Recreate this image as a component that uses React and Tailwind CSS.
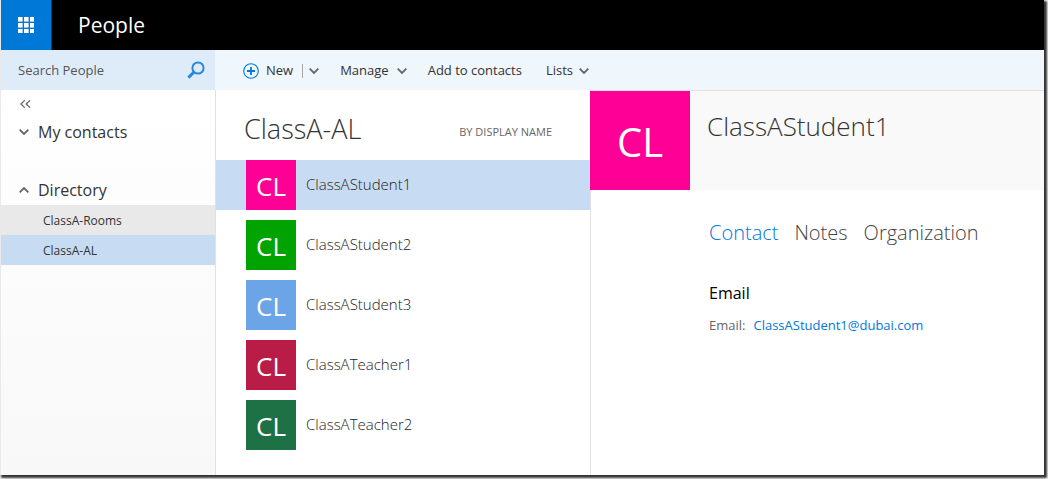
import { useState } from 'react';

const contacts = [
  { name: 'ClassAStudent1', color: 'bg-[#ff0097]' },
  { name: 'ClassAStudent2', color: 'bg-[#00a300]' },
  { name: 'ClassAStudent3', color: 'bg-[#6ba5e7]' },
  { name: 'ClassATeacher1', color: 'bg-[#b91d47]' },
  { name: 'ClassATeacher2', color: 'bg-[#1e7145]' },
];

const folders = ['ClassA-Rooms', 'ClassA-AL'];
const tabs = ['Contact', 'Notes', 'Organization'];

function Chevron({ className }) {
  return (
    <svg className={className} viewBox="0 0 10 6" fill="none" stroke="currentColor" strokeWidth="1.8">
      <path d="M0.7 0.7L5 5L9.3 0.7" />
    </svg>
  );
}

function WaffleIcon() {
  return (
    <svg className="size-4" viewBox="0 0 16 16" fill="currentColor">
      {[0, 6, 12].map(y => [0, 6, 12].map(x => <rect key={`${x}-${y}`} x={x} y={y} width="4.6" height="4.6" />))}
    </svg>
  );
}

function SearchIcon() {
  return (
    <svg className="size-[18px]" viewBox="0 0 18 18" fill="none" stroke="currentColor">
      <circle cx="11" cy="7" r="5.6" strokeWidth="2" />
      <path d="M7 11L1.4 16.6" strokeWidth="3" />
    </svg>
  );
}

function PlusIcon() {
  return (
    <svg className="size-4 text-[#0078d7]" viewBox="0 0 16 16" fill="none" stroke="currentColor">
      <circle cx="8" cy="8" r="7.3" strokeWidth="1.1" />
      <path d="M8 4V12M4 8H12" strokeWidth="1.8" />
    </svg>
  );
}

function TopBar() {
  return (
    <header className="flex h-[50px] items-center bg-black text-white">
      <button className="flex h-full w-[51px] items-center justify-center border-r border-[#333] bg-[#0078d7]" aria-label="Apps">
        <WaffleIcon />
      </button>
      <h1 className="ml-[26px] pt-0.5 text-[21px]">People</h1>
    </header>
  );
}

function CommandBar() {
  return (
    <div className="flex h-10 bg-[#eff6fc] text-[13px] text-[#333]">
      <form className="flex w-[214px] shrink-0 items-center bg-[#deecf9] pr-[10px] pl-[17px]" onSubmit={e => e.preventDefault()}>
        <input
          className="min-w-0 flex-1 pt-0.5 outline-none placeholder:text-[#555] placeholder:opacity-100"
          type="text"
          aria-label="Search People"
          placeholder="Search People"
        />
        <button className="text-[#2b88d8]" type="submit" aria-label="Search">
          <SearchIcon />
        </button>
      </form>
      <div className="flex items-center pt-0.5 pl-7">
        <button className="flex items-center gap-[7px]">
          <PlusIcon />
          New
        </button>
        <span className="ml-[9px] h-[14px] w-px bg-[#a6a6a6]" />
        <button className="ml-[6px]" aria-label="More new options">
          <Chevron className="h-[6px] w-[10px] text-[#666]" />
        </button>
        <button className="ml-[21px] flex items-center gap-2">
          Manage
          <Chevron className="h-[6px] w-[10px] text-[#666]" />
        </button>
        <button className="ml-[21px]">Add to contacts</button>
        <button className="ml-6 flex items-center gap-[6px]">
          Lists
          <Chevron className="h-[6px] w-[10px] text-[#666]" />
        </button>
      </div>
    </div>
  );
}

function Sidebar({ folder, onSelect }) {
  return (
    <nav className="bg-linear-to-b from-white to-[#f8f8f8] text-[#333]">
      <button className="mt-2 ml-[19px] flex h-3 items-center text-[#666]" aria-label="Collapse">
        <svg className="h-2 w-[11px]" viewBox="0 0 11 8" fill="none" stroke="currentColor" strokeWidth="1.3">
          <path d="M4.8 0.4L1 4L4.8 7.6M10 0.4L6.2 4L10 7.6" />
        </svg>
      </button>
      <button className="mt-[10px] flex h-6 items-center gap-[9px] pl-[18px] text-base">
        <Chevron className="h-[6px] w-[10px] text-[#666]" />
        My contacts
      </button>
      <button className="mt-[34px] flex h-6 items-center gap-[9px] pl-[18px] text-base">
        <Chevron className="h-[6px] w-[10px] rotate-180 text-[#666]" />
        Directory
      </button>
      <ul className="mt-[3px] text-[12px]">
        {folders.map(name => (
          <li key={name}>
            <button
              className={`h-[30px] w-full pt-0.5 pl-[42px] text-left ${name === folder ? 'bg-[#c7dcf2]' : 'bg-[#e9e9e9]'}`}
              onClick={() => onSelect(name)}
            >
              {name}
            </button>
          </li>
        ))}
      </ul>
    </nav>
  );
}

function ContactList({ folder, selected, onSelect }) {
  return (
    <section className="border-l border-[#e1e1e1]">
      <div className="flex h-[70px] items-center justify-between pr-[38px] pl-7">
        <h2 className="pt-2 text-[27px] font-light text-[#333]">{folder}</h2>
        <button className="pt-[14px] text-[11px] text-[#666]">BY DISPLAY NAME</button>
      </div>
      <ul className="flex flex-col gap-[10px]">
        {contacts.map(contact => (
          <li key={contact.name}>
            <button
              className={`flex h-[50px] w-full pl-[30px] text-left ${contact === selected ? 'bg-[#c7dcf2]' : ''}`}
              onClick={() => onSelect(contact)}
            >
              <span className={`flex size-[50px] items-center justify-center pt-0.5 text-[26px] text-white ${contact.color}`}>CL</span>
              <span className="ml-[10px] pt-[13px] text-[15px] font-light text-[#222]">{contact.name}</span>
            </button>
          </li>
        ))}
      </ul>
    </section>
  );
}

function ContactCard({ contact }) {
  const [tab, setTab] = useState('Contact');
  const email = `${contact.name}@dubai.com`;

  return (
    <section className="border-t border-l border-[#e1e1e1]">
      <div className="-ml-px flex h-[99px] bg-[#f9f9f9]">
        <span className={`flex w-[100px] items-center justify-center pt-0.5 text-[40px] text-white ${contact.color}`}>CL</span>
        <h2 className="ml-[17px] pt-4 text-[26px] font-light text-[#333]">{contact.name}</h2>
      </div>
      <div className="pl-[118px]">
        <div className="mt-[28px] flex gap-4 text-[20px] font-light">
          {tabs.map(name => (
            <button key={name} className={name === tab ? 'text-[#0078d7]' : 'text-[#444]'} onClick={() => setTab(name)}>
              {name}
            </button>
          ))}
        </div>
        <h3 className="mt-[33px] text-base text-black">Email</h3>
        <p className="mt-[11px] text-[13px] text-[#666]">
          Email:
          <a className="ml-2 text-[#0078d7]" href={`mailto:${email}`}>
            {email}
          </a>
        </p>
      </div>
    </section>
  );
}

export default function App() {
  const [folder, setFolder] = useState('ClassA-AL');
  const [selected, setSelected] = useState(contacts[0]);

  return (
    <div className="min-h-screen bg-white pr-1 pb-1 font-['Open_Sans','Noto_Sans',sans-serif]">
      <div className="flex min-h-[calc(100vh-4px)] flex-col border-l border-[#e9e9e9] bg-white shadow-[2px_2px_2px_1px_rgba(0,0,0,0.8)]">
        <TopBar />
        <CommandBar />
        <main className="grid flex-1 grid-cols-[214px_375px_1fr]">
          <Sidebar folder={folder} onSelect={setFolder} />
          <ContactList folder={folder} selected={selected} onSelect={setSelected} />
          <ContactCard contact={selected} />
        </main>
      </div>
    </div>
  );
}
